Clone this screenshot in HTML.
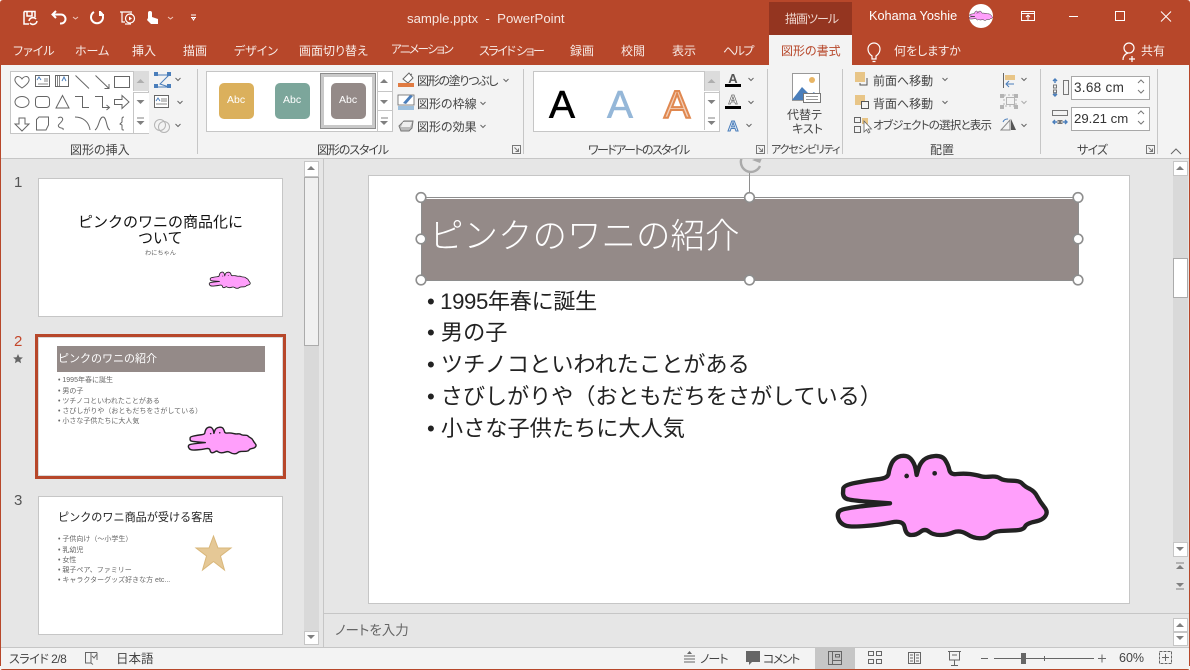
<!DOCTYPE html>
<html lang="ja"><head><meta charset="utf-8"><title>sample.pptx - PowerPoint</title>
<style>
html,body{margin:0;padding:0;background:#fff}
#w{position:relative;width:1190px;height:670px;overflow:hidden;background:#e6e6e6;font-family:"Liberation Sans","Noto Sans CJK JP",sans-serif;color:#444;font-feature-settings:"palt"}
.b{position:absolute}
.t{position:absolute;white-space:nowrap;line-height:1}
.tab{font-size:12px;top:45px;color:#f7ebe7}
.lb{font-size:12px;top:144px;color:#444}
.r{font-size:12px;color:#444}
.s{font-size:22.2px;color:#222;font-feature-settings:normal}
.m{font-size:7px;color:#666;font-feature-settings:normal}
.n{font-feature-settings:normal}
svg{position:absolute;left:0;top:0}
</style></head><body><div id="w">
<div class="b" style="left:0;top:0;width:1190px;height:65px;background:#b7472a"></div>
<div class="b" style="left:769px;top:2px;width:83px;height:33px;background:#943520"></div>
<div class="b" style="left:769px;top:35px;width:83px;height:30px;background:#f3f3f3"></div>

<!-- thumbnail pane -->
<div class="b" style="left:323px;top:159px;width:1px;height:488px;background:#c6c6c6"></div>
<div class="b" style="left:304px;top:161px;width:15px;height:484px;background:#d9d9d9"></div>
<div class="b" style="left:304px;top:161px;width:13px;height:14px;background:#fff;border:1px solid #c6c6c6"></div>
<div class="b" style="left:304px;top:177px;width:13px;height:167px;background:#f0f0f0;border:1px solid #ababab"></div>
<div class="b" style="left:304px;top:631px;width:13px;height:12px;background:#fff;border:1px solid #c6c6c6"></div>
<div class="b" style="left:38px;top:178px;width:243px;height:137px;background:#fff;border:1px solid #c6c6c6"></div>
<div class="b" style="left:35px;top:334px;width:245px;height:139px;background:#fff;border:3px solid #b7472a;outline:1px solid #d9d9d9;outline-offset:-4px"></div>
<div class="b" style="left:38px;top:496px;width:243px;height:137px;background:#fff;border:1px solid #c6c6c6"></div>
<div class="t" style="left:14px;top:175px;font-size:15px;color:#555">1</div>
<div class="t" style="left:14px;top:334px;font-size:15px;color:#c4472b">2</div>
<div class="t" style="left:14px;top:493px;font-size:15px;color:#555">3</div>
<div class="t n" style="left:78px;top:215px;font-size:15px;color:#111">ピンクのワニの商品化に</div>
<div class="t n" style="left:138px;top:231px;font-size:15px;color:#111">ついて</div>
<div class="t n" style="left:145px;top:251px;font-size:6.2px;color:#666">わにちゃん</div>
<div class="b" style="left:57px;top:346px;width:208px;height:26px;background:#948a88"></div>
<div class="t n" style="left:58px;top:354px;font-size:11px;color:#fff">ピンクのワニの紹介</div>
<div class="t m" style="left:58px;top:377px">• 1995年春に誕生</div>
<div class="t m" style="left:58px;top:388px">• 男の子</div>
<div class="t m" style="left:58px;top:398px">• ツチノコといわれたことがある</div>
<div class="t m" style="left:58px;top:408px">• さびしがりや（おともだちをさがしている）</div>
<div class="t m" style="left:58px;top:418px">• 小さな子供たちに大人気</div>
<div class="t n" style="left:58px;top:513px;font-size:11.1px;color:#222">ピンクのワニ商品が受ける客居</div>
<div class="t m" style="left:58px;top:536px">• 子供向け（～小学生）</div>
<div class="t m" style="left:58px;top:547px">• 乳幼児</div>
<div class="t m" style="left:58px;top:557px">• 女性</div>
<div class="t m" style="left:58px;top:567px">• 親子ペア、ファミリー</div>
<div class="t m" style="left:58px;top:577px">• キャラクターグッズ好きな方 etc...</div>

<!-- main slide -->
<div class="b" style="left:368px;top:175px;width:760px;height:427px;background:#fff;border:1px solid #c6c6c6"></div>
<div class="b" style="left:1173px;top:161px;width:15px;height:396px;background:#d9d9d9"></div>
<div class="b" style="left:1173px;top:161px;width:13px;height:13px;background:#fff;border:1px solid #c6c6c6"></div>
<div class="b" style="left:1173px;top:258px;width:13px;height:38px;background:#fff;border:1px solid #ababab"></div>
<div class="b" style="left:1173px;top:542px;width:13px;height:13px;background:#fff;border:1px solid #c6c6c6"></div>
<div class="b" style="left:324px;top:613px;width:866px;height:1px;background:#c6c6c6"></div>
<div class="b" style="left:1173px;top:618px;width:13px;height:12px;background:#fff;border:1px solid #c6c6c6"></div>
<div class="b" style="left:1173px;top:632px;width:13px;height:12px;background:#fff;border:1px solid #c6c6c6"></div>
<div class="t" style="left:335px;top:624px;font-size:13.500px;color:#666">ノートを入力</div>
<div class="b" style="left:421px;top:198px;width:657px;height:82px;background:#948a88"></div>
<div class="b" style="left:421px;top:197px;width:656px;height:82px;border:1px solid #8e8e8e;box-shadow:inset 0 1px 0 #fff"></div>
<div class="t n" style="left:429px;top:220px;font-size:34.5px;color:#fff;font-weight:300">ピンクのワニの紹介</div>
<div class="t s" style="left:427px;top:291px;letter-spacing:-.4px">• 1995年春に誕生</div>
<div class="t s" style="left:427px;top:322px">• 男の子</div>
<div class="t s" style="left:427px;top:354px">• ツチノコといわれたことがある</div>
<div class="t s" style="left:427px;top:386px;letter-spacing:-.1px">• さびしがりや（おともだちをさがしている）</div>
<div class="t s" style="left:427px;top:418px">• 小さな子供たちに大人気</div>

<!-- status -->
<div class="b" style="left:0;top:647px;width:1190px;height:23px;background:#f3f3f3;border-top:1px solid #c6c6c6;box-sizing:border-box"></div>
<div class="b" style="left:815px;top:648px;width:40px;height:21px;background:#c6c6c6"></div>
<div class="t" style="left:9px;top:653px;font-size:12px;letter-spacing:-.5px;color:#444">スライド 2/8</div>
<div class="t" style="left:116px;top:653px;font-size:12.500px;color:#444">日本語</div>
<div class="t" style="left:700px;top:653px;font-size:12px;letter-spacing:-1px;color:#444">ノート</div>
<div class="t" style="left:763px;top:653px;font-size:12px;letter-spacing:-1.500px;color:#444">コメント</div>
<div class="t" style="left:1119px;top:652px;font-size:12.500px;color:#444">60%</div>

<!-- titlebar text -->
<div class="t" style="left:407px;top:12px;font-size:13.200px;color:#f7e6e0">sample.pptx&nbsp; -&nbsp; PowerPoint</div>
<div class="t" style="left:785px;top:13px;font-size:12px;letter-spacing:-1px;color:#f0d8d0">描画ツール</div>
<div class="t" style="left:869px;top:10px;font-size:12.700px;color:#fff">Kohama Yoshie</div>
<div class="t tab" style="left:13px">ファイル</div>
<div class="t tab" style="left:75px">ホーム</div>
<div class="t tab" style="left:132px">挿入</div>
<div class="t tab" style="left:183px">描画</div>
<div class="t tab" style="left:234px">デザイン</div>
<div class="t tab" style="left:299px">画面切り替え</div>
<div class="t tab" style="left:391px;font-size:11.500px;letter-spacing:-1.500px">アニメーション</div>
<div class="t tab" style="left:479px;letter-spacing:-1.500px">スライド ショー</div>
<div class="t tab" style="left:570px">録画</div>
<div class="t tab" style="left:621px">校閲</div>
<div class="t tab" style="left:672px">表示</div>
<div class="t tab" style="left:723px;letter-spacing:-1.500px">ヘルプ</div>
<div class="b" style="left:0;top:65px;width:1190px;height:93px;background:#f3f3f3;border-bottom:1px solid #c6c6c6"></div>
<div class="t tab" style="left:781px;color:#b7472a">図形の書式</div>
<div class="t tab" style="left:894px">何をしますか</div>
<div class="t tab" style="left:1141px">共有</div>

<!-- ribbon boxes -->
<div class="b" style="left:197px;top:69px;width:1px;height:85px;background:#c6c6c6"></div>
<div class="b" style="left:523px;top:69px;width:1px;height:85px;background:#c6c6c6"></div>
<div class="b" style="left:767px;top:69px;width:1px;height:85px;background:#c6c6c6"></div>
<div class="b" style="left:842px;top:69px;width:1px;height:85px;background:#c6c6c6"></div>
<div class="b" style="left:1040px;top:69px;width:1px;height:85px;background:#c6c6c6"></div>
<div class="b" style="left:1157px;top:69px;width:1px;height:85px;background:#c6c6c6"></div>
<div class="b" style="left:10px;top:71px;width:137px;height:61px;background:#fff;border:1px solid #c6c6c6"></div>
<div class="b" style="left:133px;top:71px;width:15px;height:20px;background:#dcdcdc;border-left:1px solid #c6c6c6"></div>
<div class="b" style="left:133px;top:92px;width:15px;height:19px;background:#fff;border:solid #c6c6c6;border-width:1px 0 1px 1px"></div>
<div class="b" style="left:133px;top:112px;width:15px;height:21px;background:#fff;border-left:1px solid #c6c6c6"></div>
<div class="b" style="left:206px;top:71px;width:170px;height:59px;background:#fff;border:1px solid #c6c6c6"></div>
<div class="b" style="left:219px;top:83px;width:35px;height:36px;border-radius:5px;background:#dbb05c"></div>
<div class="b" style="left:275px;top:83px;width:35px;height:36px;border-radius:5px;background:#7ca69b"></div>
<div class="b" style="left:320px;top:73px;width:48px;height:48px;border:4px solid #c9c9c9;outline:1px solid #8c8c8c;outline-offset:-1px"></div>
<div class="b" style="left:331px;top:83px;width:35px;height:36px;border-radius:5px;background:#948a88"></div>
<div class="t" style="left:227px;top:95px;font-size:10.500px;color:#fff">Abc</div>
<div class="t" style="left:283px;top:95px;font-size:10.500px;color:#fff">Abc</div>
<div class="t" style="left:339px;top:95px;font-size:10.500px;color:#fff">Abc</div>
<div class="b" style="left:377px;top:71px;width:14px;height:19px;background:#fff;border:1px solid #c6c6c6"></div>
<div class="b" style="left:377px;top:91px;width:14px;height:18px;background:#fff;border:1px solid #c6c6c6"></div>
<div class="b" style="left:377px;top:110px;width:14px;height:20px;background:#fff;border:1px solid #c6c6c6"></div>
<div class="b" style="left:533px;top:71px;width:185px;height:59px;background:#fff;border:1px solid #c6c6c6"></div>
<div class="b" style="left:704px;top:71px;width:15px;height:20px;background:#dcdcdc;border-left:1px solid #c6c6c6"></div>
<div class="b" style="left:704px;top:92px;width:14px;height:18px;background:#fff;border:solid #c6c6c6;border-width:1px 0 1px 1px"></div>
<div class="b" style="left:704px;top:111px;width:14px;height:19px;background:#fff;border-left:1px solid #c6c6c6"></div>
<div class="b" style="left:1071px;top:76px;width:77px;height:22px;background:#fff;border:1px solid #a8a8a8"></div>
<div class="b" style="left:1071px;top:107px;width:77px;height:22px;background:#fff;border:1px solid #a8a8a8"></div>

<!-- ribbon text -->
<div class="t r" style="left:417px;top:75px;letter-spacing:-1.300px">図形の塗りつぶし</div>
<div class="t r" style="left:417px;top:98px">図形の枠線</div>
<div class="t r" style="left:417px;top:121px">図形の効果</div>
<div class="t r" style="left:787px;top:109px">代替テ</div>
<div class="t r" style="left:792px;top:123px">キスト</div>
<div class="t r" style="left:873px;top:75px">前面へ移動</div>
<div class="t r" style="left:873px;top:98px">背面へ移動</div>
<div class="t r" style="left:873px;top:121px;font-size:11.500px;letter-spacing:-.8px">オブジェクトの選択と表示</div>
<div class="t" style="left:1074px;top:81px;font-size:13.500px;letter-spacing:.3px;color:#333">3.68 cm</div>
<div class="t" style="left:1074px;top:112px;font-size:13.200px;color:#333">29.21 cm</div>
<div class="t lb" style="left:70px">図形の挿入</div>
<div class="t lb" style="left:317px;letter-spacing:-1.100px">図形のスタイル</div>
<div class="t lb" style="left:588px;letter-spacing:-1.600px">ワードアートのスタイル</div>
<div class="t lb" style="left:771px;font-size:11px;top:145px;letter-spacing:-1.100px">アクセシビリティ</div>
<div class="t lb" style="left:930px">配置</div>
<div class="t lb" style="left:1077px;letter-spacing:-.8px">サイズ</div>

<svg width="1190" height="670" viewBox="0 0 1190 670" fill="none">
<defs>
<g id="croc">
<path d="M70 145Q72 135 106 128.500Q140 122 172 118Q205 115 206 100Q208 85 216 68Q225 52 243 48Q262 45 272 56Q283 68 287 87L290 105L295 87Q300 70 311 60Q322 50 345 48Q368 47 376 61Q385 75 388 90Q392 105 411 102Q430 100 450 102Q470 105 480 108Q490 112 510 110Q530 108 540 115Q550 122 575 122Q600 122 607 131Q615 140 630 147Q645 155 652 170Q660 185 672 200Q685 215 677 227Q670 240 645 245Q620 250 615 260Q610 270 587 271Q565 272 542 273Q520 275 510 285Q500 295 480 295Q460 295 440 282Q420 270 400 277Q380 285 360 285Q340 285 327 275Q315 265 302 275Q290 285 274 285Q258 285 254 262Q250 240 215 247Q180 255 135 258Q90 262 75 256Q60 250 55 235Q50 220 60 212Q70 205 140 197L210 190L155 186Q100 182 85 178Q70 175 69 160Z" fill="#ff9ffb" stroke="#222" stroke-width="13" stroke-linejoin="round"/>
<circle cx="260" cy="108" r="7" fill="#222"/><circle cx="344" cy="100" r="7" fill="#222"/>
</g>
<path id="up" d="M-4 2L0 -2L4 2Z" fill="#808080"/>
<path id="dn" d="M-4 -2L0 2L4 -2Z" fill="#808080"/>
<path id="cv" d="M-2.500 -1L0 1.500L2.500 -1" stroke="#666" stroke-width="1"/>
<path id="lau" d="M0 0h8v8h-8zM2 2l4 4M6 3v3h-3" stroke="#777" stroke-width="1"/>
<clipPath id="below"><rect x="700" y="159" width="100" height="40"/></clipPath>
</defs>

<!-- window frame -->
<path d="M0.500 4V666M1189.500 4V666M0 669.500H1190" stroke="#b7472a"/>
<path d="M0 0h3Q0 0 0 3ZM1190 0h-3Q1190 0 1190 3ZM0 670h3Q0 670 0 667ZM1190 670h-3Q1190 670 1190 667Z" fill="#fff"/>

<!-- QAT -->
<g stroke="#fff" stroke-width="1.500" fill="none">
<path d="M24 11.500H35V17M24 11.500V24H29M27 12V16H32V12"/>
<path d="M29 21a4 4 0 0 1 7-2M37 21a4 4 0 0 1-7 2"/>
<path d="M56 11l-3.500 3.500 3.500 3.500M53 14.500H61a4 4 0 0 1 0 9h-1" stroke-width="2"/>
<path d="M94 12a6 6 0 1 0 6 0M100 11v4h4" stroke-width="2"/>
<path d="M120 12h12M122 12v10h3M131 15v-2" stroke-width="1.200"/><circle cx="130" cy="18.500" r="4.500" stroke-width="1.200"/><path d="M129 16.500l3 2-3 2z" fill="#fff" stroke="none"/>
<path d="M125 24h6" stroke-width="1.200"/>
<path d="M148 18V13a2 2 0 0 1 4 0V17L158 19V24H151L147 20Z" fill="#fff" stroke="none"/>
</g>
<path d="M73 17l2.500 2 2.500-2M168 17l2.500 2 2.500-2" stroke="#f0c8bc"/>
<path d="M191 15h5M191 17.500h5M192 17.500l1.500 2.500 1.500-2.500" stroke="#fff"/>

<!-- window controls -->
<g stroke="#fff" stroke-width="1">
<rect x="1021.500" y="11.500" width="13" height="9"/><path d="M1021.500 13.500H1034.500M1028 20V15M1026 17l2-2 2 2"/>
<path d="M1069 16.500H1078"/>
<rect x="1115.500" y="11.500" width="9" height="9"/>
<path d="M1161 11.500L1171 21.500M1171 11.500L1161 21.500"/>
</g>
<circle cx="981" cy="16" r="12" fill="#fff"/>
<use href="#croc" transform="translate(967,9.300) scale(.0375)"/>
<g stroke="#fff" stroke-width="1.200">
<path d="M872 56c-3-2-4-4-4-7a6 6 0 0 1 12 0c0 3-1 5-4 7v3h-4zM872.500 61.500h3"/>
<circle cx="1129" cy="48" r="5"/><path d="M1123 60c0-4 2-6 5-7M1132 56v6M1129 59h6"/>
</g>

<!-- shape gallery -->
<g stroke="#666" stroke-width="1">
<path d="M22 88C16 84 14.500 81 15 79C16 75.500 20 76 22 79C24 76 28 75.500 29 79C29.500 81 28 84 22 88Z"/>
<rect x="35.500" y="75.500" width="14" height="11"/><path d="M44 79h4M44 81h4M38 84h10" stroke="#888"/>
<path d="M37 80l2-3 2 3" stroke="#4a7ebb"/>
<rect x="55.500" y="75.500" width="13" height="11"/><path d="M57.500 76v10M59.500 76v10" stroke="#888"/>
<path d="M62 81l2-4 2 4" stroke="#4a7ebb"/>
<path d="M75.500 75.500L89 88.500M95.500 75.500L109 88.500M109 84v4.500h-4.500"/>
<rect x="114.500" y="76.500" width="15" height="11"/>
<ellipse cx="22" cy="102" rx="7" ry="5.500"/>
<rect x="35.500" y="96.500" width="14" height="11" rx="3"/>
<path d="M62.500 95.500L69 108H56Z"/>
<path d="M75 96.500H82.500V107.500H89M95 96.500H102.500V107.500H109M106.500 105l3 2.500-3 2.500"/>
<path d="M114.500 99.500H122V95.500L129 102L122 108.500V104.500H114.500Z"/>
<path d="M19 118H25V124H29L22 131L15 124H19Z"/>
<path d="M36.500 119.500L39 117H48.500V125L46 130H36.500Z"/>
<path d="M58 118c3-2 6 0 4 3s-5 4-3 6 5 0 4 3"/>
<path d="M75 117c8 0 14 5 15 13M95 130c4-2 4-13 8-13s3 12 7 13"/>
<path d="M124 117c-2 0-2 1-2 3v2l-2 2 2 1v3c0 2 0 2 2 2"/>
</g>
<g stroke="#4a7ebb" stroke-width="1"><path d="M156 75H169L160 84L169 87H156"/></g>
<g fill="#4a7ebb"><rect x="154" y="72" width="4" height="4"/><rect x="167" y="72" width="4" height="4"/><rect x="154" y="84" width="4" height="4"/><rect x="167" y="84" width="4" height="4"/></g>
<use href="#cv" x="178" y="79"/>
<rect x="154.500" y="95.500" width="14" height="12" stroke="#666" fill="#fff"/><path d="M156 101l2-3 2 3" stroke="#4a7ebb"/><path d="M161 99h6M161 101h6M156 104h11" stroke="#888"/>
<use href="#cv" x="180" y="102"/>
<circle cx="160" cy="125" r="5.500" stroke="#b4b4b4"/><circle cx="164" cy="127" r="5.500" stroke="#b4b4b4"/>
<use href="#cv" x="178" y="125"/>
<use href="#up" x="140.500" y="81" opacity=".5"/><use href="#dn" x="140.500" y="102"/><path d="M137 118h7" stroke="#808080"/><use href="#dn" x="140.500" y="123"/>
<use href="#up" x="384" y="81"/><use href="#dn" x="384" y="102"/><path d="M381 118h7" stroke="#808080"/><use href="#dn" x="384" y="123"/>
<use href="#up" x="711.500" y="81" opacity=".5"/><use href="#dn" x="711.500" y="102"/><path d="M708 118h7" stroke="#808080"/><use href="#dn" x="711.500" y="123"/>

<!-- fill icons -->
<path d="M403 79l6-6 4 5-5 5zM410 75l2-1" stroke="#666" fill="#fff"/><path d="M398 83h16v4h-16z" fill="#e07b42"/>
<rect x="398" y="95" width="16" height="10" stroke="#666" stroke-width=".8" fill="#fff"/><rect x="398" y="106" width="16" height="4" fill="#9ec0dd"/><path d="M403 103l7-8 3 1-7 8z" fill="#4a7ebb"/>
<path d="M399 126l5-5h9l-1 7-3 3h-8z" fill="#bbb" stroke="#777"/><path d="M403 122h9l-2 5h-9z" fill="#eee"/>
<use href="#cv" x="506" y="80"/><use href="#cv" x="483" y="103"/><use href="#cv" x="483" y="126"/>

<!-- WordArt -->
<g font-family="Liberation Sans" font-size="39" text-anchor="middle">
<text x="562" y="118" fill="#000" stroke="#000" stroke-width=".6">A</text>
<text x="620" y="118" fill="#95b7d8" stroke="#95b7d8" stroke-width=".6">A</text>
<text x="677" y="118" fill="#f2cfb8" stroke="#e08850" stroke-width="2">A</text>
</g>
<g font-family="Liberation Sans" font-weight="bold" text-anchor="middle">
<text x="733" y="83" font-size="13" fill="#555">A</text>
<text x="733" y="104" font-size="13" fill="#fff" stroke="#666" stroke-width=".7">A</text>
<text x="733" y="131" font-size="15" fill="#dfe9f5" stroke="#4a7ebb" stroke-width="1">A</text>
</g>
<path d="M725 84h16v3h-16zM725 106h16v3h-16z" fill="#000"/>
<use href="#cv" x="751" y="79"/><use href="#cv" x="751" y="102"/><use href="#cv" x="749" y="125"/>
<use href="#lau" x="512.500" y="145.500"/><use href="#lau" x="756.500" y="145.500"/><use href="#lau" x="1146.500" y="145.500"/>
<path d="M1171 154l5-5 5 5" stroke="#666"/>

<!-- alt text -->
<rect x="792.500" y="73.500" width="27" height="27" stroke="#999" fill="#fff"/>
<circle cx="812" cy="80" r="3" fill="#e8b565"/>
<path d="M792 100L802 87L810 95L814 92L820 100Z" fill="#4a7ebb"/>
<rect x="803.500" y="93.500" width="17" height="9" fill="#fff" stroke="#777"/><path d="M806 96.500h12M806 99.500h12" stroke="#999"/>

<!-- arrange -->
<rect x="855" y="72" width="10" height="10" fill="#e8c587"/>
<path d="M867 78v7h-7v-2" stroke="#555"/>
<rect x="855" y="95" width="10" height="10" fill="#e8c587"/>
<rect x="861.500" y="101.500" width="7" height="7" stroke="#555" fill="#f3f3f3"/>
<g stroke="#666"><rect x="854.500" y="117.500" width="6" height="5"/><rect x="854.500" y="126.500" width="6" height="6"/></g>
<rect x="862" y="118" width="6" height="6" fill="#e8c587"/>
<path d="M864 121V132L866.500 129.500L868.500 133L870 132L868 129H871.500Z" fill="#fff" stroke="#666" stroke-width=".8"/>
<use href="#cv" x="945" y="79"/><use href="#cv" x="945" y="102"/>
<path d="M1003.500 73V88" stroke="#666"/><rect x="1005" y="75" width="10" height="5" fill="#e8c587"/><path d="M1014 84h-8M1009 81l-3 3 3 3" stroke="#4a7ebb"/>
<use href="#cv" x="1024" y="79"/>
<g stroke="#b4b4b4"><rect x="1006.500" y="97.500" width="8" height="7"/><rect x="1004" y="95" width="12" height="11" stroke-dasharray="2 2"/></g>
<g fill="#b4b4b4"><rect x="1000" y="94" width="4" height="4"/><rect x="1014" y="94" width="4" height="4"/><rect x="1000" y="105" width="4" height="4"/><rect x="1014" y="105" width="4" height="4"/></g>
<use href="#cv" x="1024" y="102" opacity=".5"/>
<path d="M1001 130L1010 120V130Z" stroke="#888"/><path d="M1011 119V130H1016Z" fill="#555"/><path d="M1003 122a5 5 0 0 1 5-3" stroke="#4a7ebb"/>
<use href="#cv" x="1024" y="125"/>

<!-- size -->
<rect x="1063.500" y="80.500" width="5" height="14" stroke="#777"/>
<path d="M1055 79v4M1055 92v4M1053 81l2-2 2 2M1053 94l2 2 2-2" stroke="#4a7ebb" stroke-width="1.400"/><path d="M1053.500 85h3v3h-3zM1053.500 90h3v3h-3z" stroke="#777"/>
<rect x="1052.500" y="110.500" width="15" height="5" stroke="#777"/>
<path d="M1053 122h4M1063 122h4M1055 120l-2 2 2 2M1065 120l2 2-2 2" stroke="#4a7ebb" stroke-width="1.400"/><path d="M1058 120.500h1.500v3h-1.500zM1060.500 120.500h1.500v3h-1.500z" stroke="#777"/>
<g stroke="#777"><path d="M1138 83l3-3 3 3M1138 90l3 3 3-3M1138 114l3-3 3 3M1138 121l3 3 3-3"/></g>

<!-- thumbs art -->
<use href="#croc" transform="translate(205.700,269) scale(.0656)"/>
<use href="#croc" transform="translate(182.600,422) scale(.108)"/>
<path d="M213.500 536L218 548H231L220.500 556L224.500 570L213.500 561.500L202.500 570L206.500 556L196 548H209Z" fill="#e5c896" stroke="#d9b77a"/>
<path d="M18 354l1.400 3.200 3.500.3-2.600 2.300.8 3.400-3.100-1.800-3.100 1.800.8-3.400-2.600-2.300 3.500-.3z" fill="#666"/>
<use href="#up" x="311" y="168"/><use href="#dn" x="311" y="637"/>
<use href="#up" x="1180" y="168"/><use href="#dn" x="1180" y="549"/>
<path d="M1176 563h8" stroke="#808080"/><use href="#up" x="1180" y="567"/><path d="M1176 589h8" stroke="#808080"/><use href="#dn" x="1180" y="585"/>
<use href="#up" x="1180" y="625"/><use href="#dn" x="1180" y="638"/>

<!-- selection -->
<path d="M749.500 172V197" stroke="#8e8e8e"/>
<g clip-path="url(#below)"><path d="M760 166a10 10 0 1 1-8-14" stroke="#aaa" stroke-width="2.400"/><path d="M752 160l8 3 3-7z" fill="#aaa"/></g>
<g fill="#fff" stroke="#8e8e8e" stroke-width="1.600">
<circle cx="421" cy="197.500" r="4.800"/><circle cx="749.500" cy="197.500" r="4.800"/><circle cx="1078" cy="197.500" r="4.800"/>
<circle cx="421" cy="239" r="4.800"/><circle cx="1078" cy="239" r="4.800"/>
<circle cx="421" cy="280" r="4.800"/><circle cx="749.500" cy="280" r="4.800"/><circle cx="1078" cy="280" r="4.800"/>
</g>
<use href="#croc" transform="translate(820,440) scale(.3333)"/>

<!-- status icons -->
<path d="M85.500 652.500H91V663H85.500ZM91 652.500H97M97 652.500V660M91 663l2 1.500" stroke="#666"/>
<path d="M92 656l2 2 3-4" stroke="#666"/>
<path d="M684 656h11M684 659h11M684 662h11" stroke="#666"/><path d="M687 654l2.500-3 2.500 3z" fill="#666"/>
<path d="M746 651h14v11h-8l-3 3v-3h-3z" fill="#666"/>
<g stroke="#666">
<rect x="828.500" y="651.500" width="13" height="13"/><path d="M832.500 652V664M832.500 660.500H841"/><rect x="835.500" y="654.500" width="4" height="2.500"/>
<rect x="868.500" y="651.500" width="5" height="4"/><rect x="876.500" y="651.500" width="5" height="4"/><rect x="868.500" y="659.500" width="5" height="4"/><rect x="876.500" y="659.500" width="5" height="4"/>
<path d="M908.500 652.500h12v11h-12zM914.500 652V664M910 655h3M910 658h3M910 661h3M916 655h3M916 658h3M916 661h3"/>
<path d="M948 651.500H961M949.500 652V660H959.500V652M954.500 660V665M951 665.500H958M952 655h5"/>
<path d="M981 658.500H988M994 658.500H1094M1044.500 656V661M1098 658.500H1106M1102 654.500V662.500"/>
<rect x="1159.500" y="651.500" width="12" height="12" stroke-dasharray="3 1"/><path d="M1165.500 654V661M1162 657.500H1169"/>
</g>
<rect x="1021" y="653" width="5" height="11" fill="#666"/>
</svg>
</div></body></html>
